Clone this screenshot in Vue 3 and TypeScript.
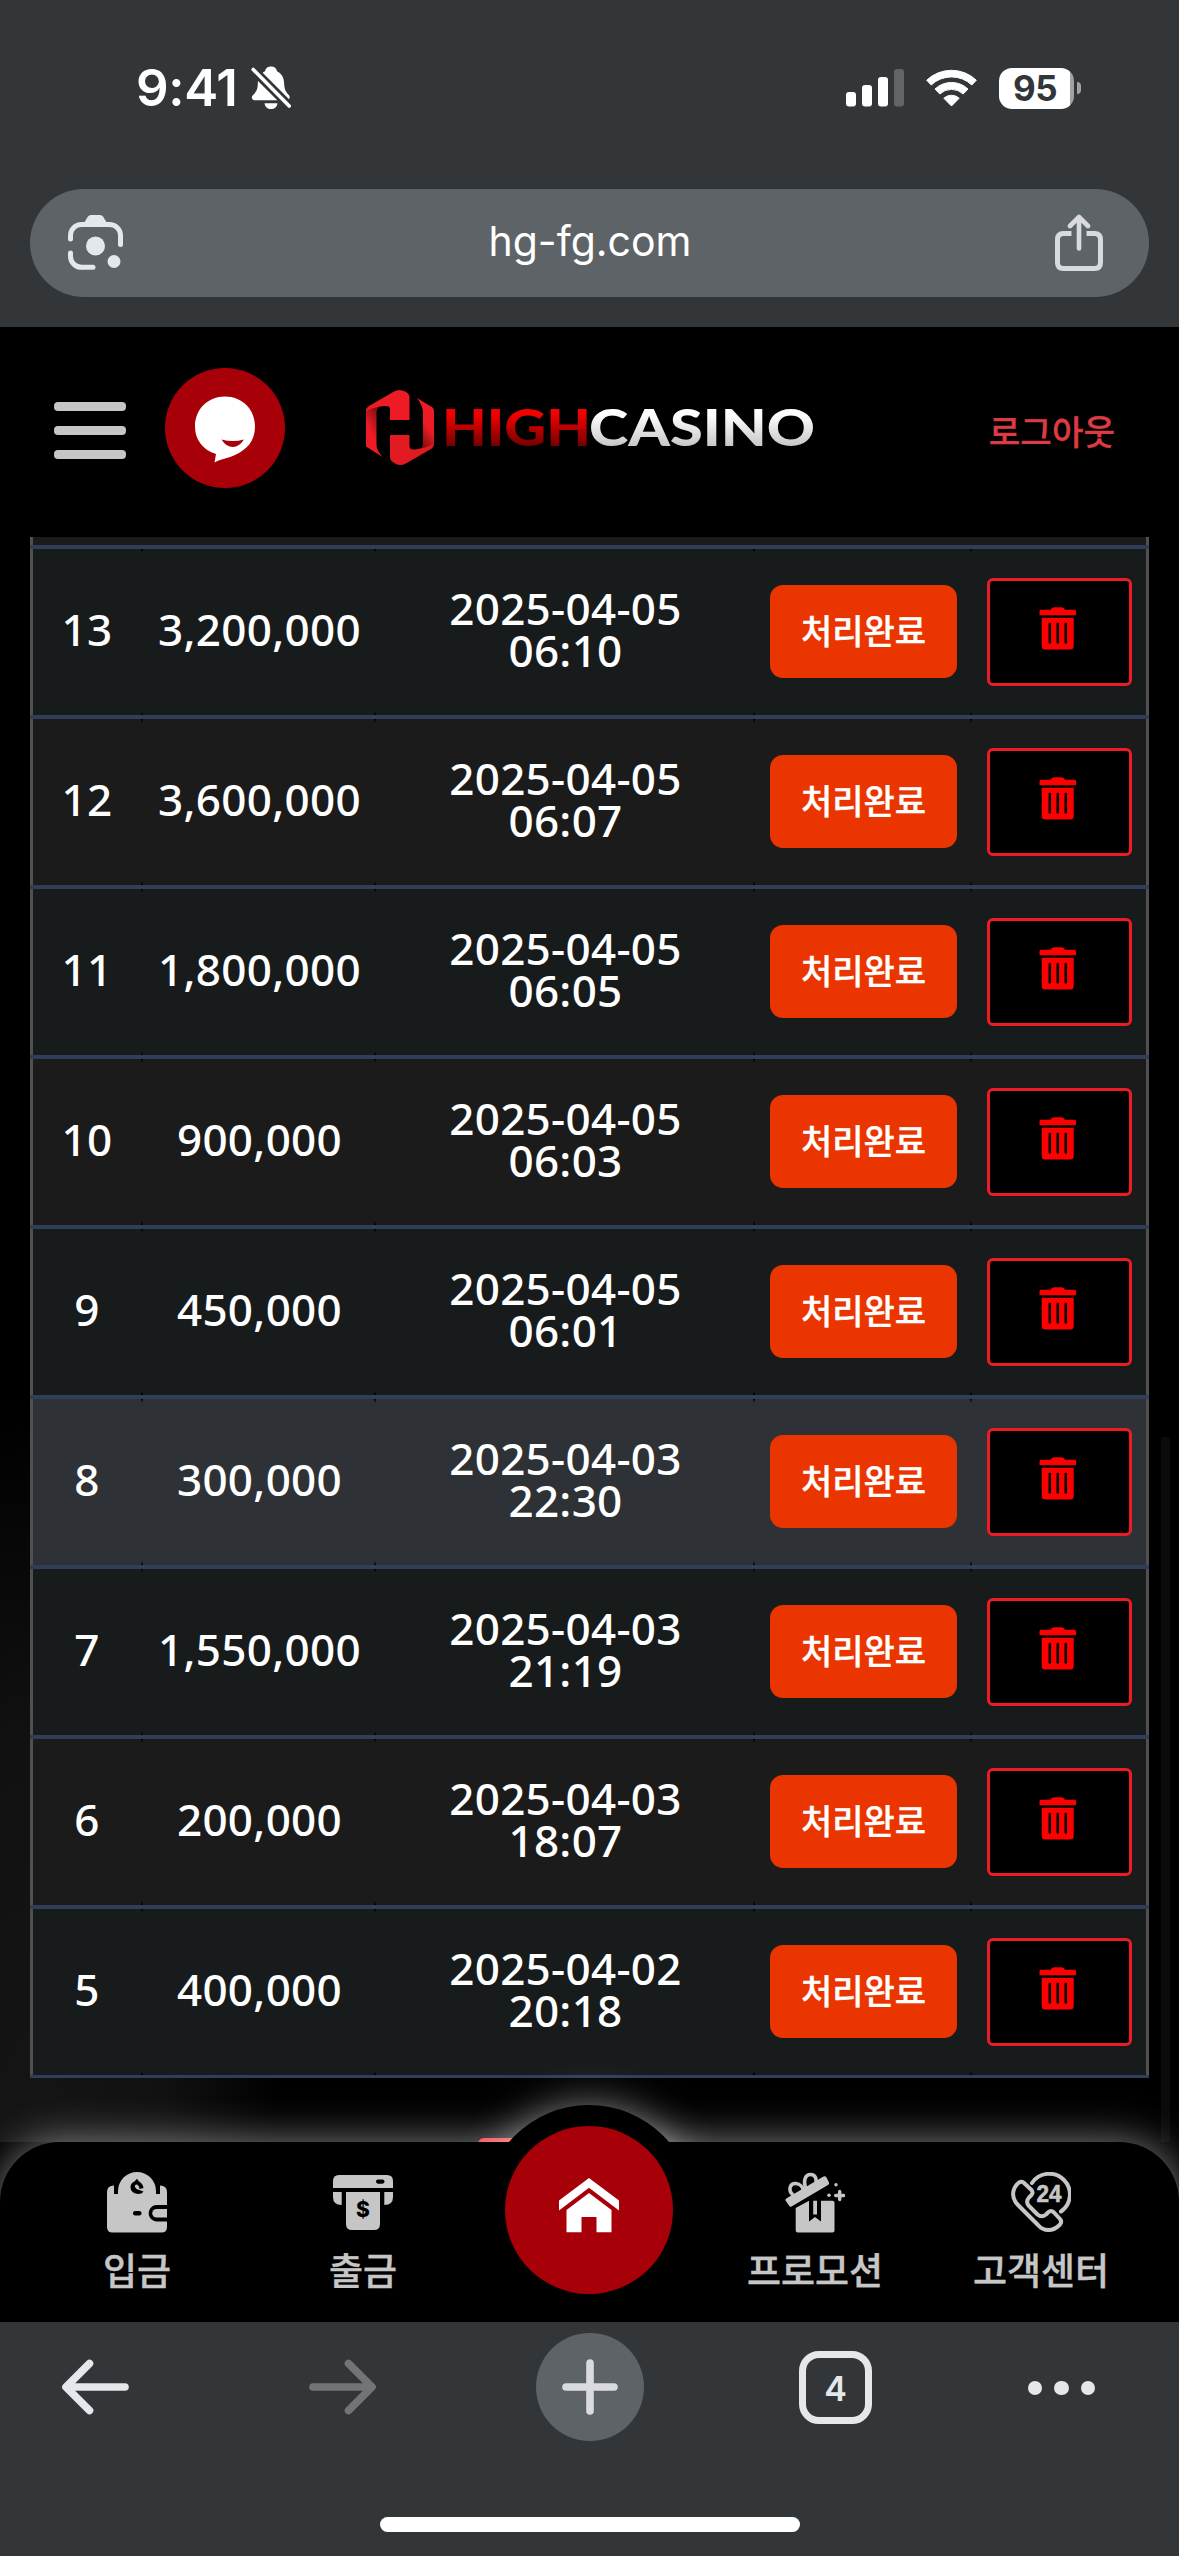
<script setup lang="ts">
interface Row {
  no: number
  amount: string
  date: string
  time: string
  active?: boolean
}

const rows: Row[] = [
  { no: 13, amount: '3,200,000', date: '2025-04-05', time: '06:10' },
  { no: 12, amount: '3,600,000', date: '2025-04-05', time: '06:07' },
  { no: 11, amount: '1,800,000', date: '2025-04-05', time: '06:05' },
  { no: 10, amount: '900,000', date: '2025-04-05', time: '06:03' },
  { no: 9, amount: '450,000', date: '2025-04-05', time: '06:01' },
  { no: 8, amount: '300,000', date: '2025-04-03', time: '22:30', active: true },
  { no: 7, amount: '1,550,000', date: '2025-04-03', time: '21:19' },
  { no: 6, amount: '200,000', date: '2025-04-03', time: '18:07' },
  { no: 5, amount: '400,000', date: '2025-04-02', time: '20:18' },
]
</script>

<template>
  <div class="screen">
    <div class="chrome-top">
      <div class="status">
        <span class="clock">9:41</span>
        <svg class="bell" width="40" height="44" viewBox="0 0 40 44">
          <path d="M20 0.5C23.4 0.5 25.5 2.6 26 5.2C31 7.6 33 12 33.2 18C33.4 24 35 26 38 29.2C39.4 30.8 38.6 34 36 34.3H3.5C0.8 34 0 31 1.8 29.2C5 26 6.6 24 6.8 18C7 12 9 7.6 14 5.2C14.5 2.6 16.6 0.5 20 0.5Z" fill="#fff" />
          <path d="M13.5 37.2H26.5C26 40.8 23.5 43 20 43C16.5 43 14 40.8 13.5 37.2Z" fill="#fff" />
          <path d="M2 3.5L38.2 39.8" stroke="#333639" stroke-width="9" />
          <path d="M2.2 3.5L38.2 40" stroke="#fff" stroke-width="3.6" stroke-linecap="round" />
        </svg>
        <svg class="signal" width="58" height="38" viewBox="0 0 58 38">
          <rect x="0" y="23" width="10" height="14.500" rx="3" fill="#fff" />
          <rect x="16" y="16" width="10" height="21.500" rx="3" fill="#fff" />
          <rect x="32" y="8" width="10" height="29.500" rx="3" fill="#fff" />
          <rect x="48" y="0" width="10" height="37.500" rx="3" fill="#636466" />
        </svg>
        <svg class="wifi" width="51" height="38" viewBox="0 0 51 38">
          <path d="M0.700 11.200A36 36 0 0 1 50.300 11.200L45.800 16A29.500 29.500 0 0 0 5.200 16Z" fill="#fff" stroke="#fff" stroke-width="1" stroke-linejoin="round" />
          <path d="M9 20A24 24 0 0 1 42 20L37.200 25A17 17 0 0 0 13.800 25Z" fill="#fff" stroke="#fff" stroke-width="1" stroke-linejoin="round" />
          <path d="M17.800 29.200A11.500 11.500 0 0 1 33.200 29.200L25.500 37Z" fill="#fff" stroke="#fff" stroke-width="1" stroke-linejoin="round" />
        </svg>
        <div class="battery"><span>95</span></div>
        <div class="nub"></div>
      </div>
      <div class="urlbar">
        <svg width="56" height="56" viewBox="0 0 56 56" fill="none">
          <path d="M2.500 24V20A11 11 0 0 1 13.500 9.500H41.500A11 11 0 0 1 52.500 20V29.500" stroke="#e4e8eb" stroke-width="5" stroke-linecap="round" />
          <path d="M2.500 38V41.500A11 11 0 0 0 13.500 52.300H25" stroke="#e4e8eb" stroke-width="5" stroke-linecap="round" />
          <path d="M16 8L19.800 1.800Q21 0 23 0H32Q34 0 35.200 1.800L39 8Z" fill="#e4e8eb" />
          <circle cx="27.500" cy="31" r="9.500" fill="#e4e8eb" />
          <circle cx="46" cy="46.500" r="6.500" fill="#e4e8eb" />
        </svg>
        <span class="url">hg-fg.com</span>
        <svg width="48" height="58" viewBox="0 0 48 58" fill="none" stroke="#d9dade" stroke-width="5" stroke-linecap="round" stroke-linejoin="round">
          <path d="M16.500 19.500H8.500Q2.500 19.500 2.500 25.500V48.500Q2.500 54.500 8.500 54.500H39.500Q45.500 54.500 45.500 48.500V25.500Q45.500 19.500 39.500 19.500H31.500" stroke-linecap="butt" />
          <path d="M24 34.500V3.500M15 12L24 3L33 12" stroke-width="4.600" />
        </svg>
      </div>
    </div>

    <header class="site-header">
      <div class="burger"><i></i><i></i><i></i></div>
      <div class="chat">
        <svg width="62" height="68" viewBox="0 0 62 68">
          <path d="M31 0.500C48 0.500 61 13 61 30.500C61 46 52 54 41 59C33 62.500 27 63 20.500 66.500L22 58C9 54 1 44 1 30.500C1 13 14 0.500 31 0.500Z" fill="#fff" />
          <path d="M27.500 43.500Q39 46.500 50 43.500Q45 51 39 51Q32 51 27.500 43.500Z" fill="#a80008" />
        </svg>
      </div>
      <svg class="logo" width="448" height="76" viewBox="366 390 448 76">
        <defs>
          <linearGradient id="lgRed" x1="0" y1="0" x2="0" y2="1">
            <stop offset="0.300" stop-color="#f40000" />
            <stop offset="0.850" stop-color="#6b0000" />
          </linearGradient>
          <linearGradient id="lgSilver" x1="0" y1="0" x2="0" y2="1">
            <stop offset="0.300" stop-color="#ffffff" />
            <stop offset="0.850" stop-color="#c4c4c4" />
          </linearGradient>
          <linearGradient id="lgLeft" x1="0.800" y1="0" x2="0.200" y2="1">
            <stop offset="0" stop-color="#6d0a0f" />
            <stop offset="0.600" stop-color="#ed1c24" />
          </linearGradient>
          <linearGradient id="lgRight" x1="0.700" y1="0" x2="0.300" y2="1">
            <stop offset="0.500" stop-color="#ed1c24" />
            <stop offset="1" stop-color="#6d0a0f" />
          </linearGradient>
        </defs>
        <path d="M366 411L380 406Q376.500 408 376.500 413V445Q376.500 450 382.500 457L366 446.500Z" fill="url(#lgLeft)" />
        <path d="M366 410Q366 408 369 406L394 391.500Q400 388.500 405 391.500L407.500 393Q409.500 394.500 409.500 397V420H390V409Q390 405.500 384 406Q374 407 366 411.500Z" fill="#ed1c24" />
        <path d="M417 398L431 406.500Q434 408 434 411V445L420 450Q423 447 423 443V413Q423 406 417 398Z" fill="url(#lgRight)" />
        <path d="M434 444Q434 447 431 449L406 463.500Q400 466.500 395 463.500L392 461.500Q390 460 390 457V435H409.500V446Q409.500 450 415 449.500Q426 448 434 444Z" fill="#e21b23" />
        <g font-family="Lato, 'Liberation Sans', sans-serif" font-weight="900" font-size="51">
          <text x="442" y="446" textLength="149" lengthAdjust="spacingAndGlyphs" fill="url(#lgRed)">HIGH</text>
          <text x="589" y="446" textLength="226" lengthAdjust="spacingAndGlyphs" fill="url(#lgSilver)">CASINO</text>
        </g>
      </svg>
      <a class="logout">로그아웃</a>
    </header>

    <main class="content">
      <div class="table">
        <div class="row stub"></div>
        <div v-for="r in rows" :key="r.no" class="row" :class="{ active: r.active }">
          <div class="cell no">{{ r.no }}</div>
          <div class="cell">{{ r.amount }}</div>
          <div class="cell"><span class="date">{{ r.date }} {{ r.time }}</span></div>
          <div class="cell act"><span class="done">처리완료</span></div>
          <div class="cell act last">
            <span class="trash">
              <svg width="38" height="44" viewBox="0 0 38 44">
                <path d="M2 2.700H11.500Q12.500 0.200 15 0.200H22.500Q25 0.200 26 2.700H35.500Q37 2.700 37 4.200V8.200H0.500V4.200Q0.500 2.700 2 2.700Z" fill="#f00" />
                <path d="M2.700 10.800H34.700V39Q34.700 42.600 31.200 42.600H6.200Q2.700 42.600 2.700 39Z" fill="#f00" />
                <path d="M10.800 17V35.500M18.800 17V35.500M26.800 17V35.500" stroke="#000" stroke-width="2.600" stroke-linecap="round" />
              </svg>
            </span>
          </div>
        </div>
      </div>
      <div class="pager"></div>
    </main>

    <nav class="tabs">
      <div class="tabs-bg"></div>
      <div class="bump"></div>
      <div class="tab">
        <svg width="60" height="61" viewBox="0 0 60 61">
          <path d="M0 55V20Q0 13.500 7 13.500V22H11V19A19 19 0 0 1 49 19V22H53V13.500Q60 13.500 60 20V33H49A8.300 8.300 0 0 0 49 49.500H60V55Q60 60.500 54.500 60.500H5.500Q0 60.500 0 55Z" fill="#c6c6c6" />
          <path d="M60 37V45.500H49.500A4.250 4.250 0 0 1 49.500 37Z" fill="#c6c6c6" />
          <rect x="26" y="39" width="8.500" height="4.500" rx="2.200" fill="#000" />
          <path d="M30 6.800L32 9.500Q36 11.500 36.500 16L32.500 17Q32 12.500 29 12.500Q26.500 14 29.500 17L36.500 19.500Q35 22 31 22Q23.500 21 23.500 15Q23.500 11 27.500 9.500Z" fill="#000" />
        </svg>
        <span>입금</span>
      </div>
      <div class="tab">
        <svg width="60" height="61" viewBox="0 -3 60 61">
          <path d="M0 13V6Q0 0 6 0H54Q60 0 60 6V13Z" fill="#c6c6c6" />
          <path d="M0 17H8.700V30Q0 30 0 22ZM60 17H51.300V30Q60 30 60 22Z" fill="#c6c6c6" />
          <path d="M13 17H47V49Q47 55 41 55H19Q13 55 13 49Z" fill="#c6c6c6" />
          <rect x="43" y="4.500" width="8.500" height="4.200" rx="2.100" fill="#000" />
          <text x="30" y="42" text-anchor="middle" font-family="Inter, sans-serif" font-weight="800" font-size="21" fill="#000">$</text>
        </svg>
        <span>출금</span>
      </div>
      <div class="tab home">
        <div class="home-btn">
          <svg width="60" height="55" viewBox="0 0 60 55" fill="#fff">
            <path d="M30 0L60 22.500V32.500L30 9.700L0 32.500V22.500Z" />
            <path d="M30 15L52.500 32V54.300H37.500V39H22.500V54.300H7.500V32Z" />
          </svg>
        </div>
      </div>
      <div class="tab">
        <svg width="60" height="61" viewBox="0 0 60 61">
          <g fill="none" stroke="#c6c6c6" stroke-width="3.600">
            <path d="M8 23C2.500 18 5 11 11 11.500C15 12 18 15 18.500 19" />
            <path d="M21 17C18 9 20 2.500 25.500 2.500C31 2.500 32 8 30.500 12" />
          </g>
          <path d="M1.200 26.500L38.500 4.500Q40.500 3.500 41.500 5.500L44 10.500Q44.500 12 43 13L6.500 34.500Q5 35.200 4 33.500L0.500 28.500Q0 27.300 1.200 26.500Z" fill="#c6c6c6" />
          <path d="M10.700 36L24 28.700V49.500L30 45L36 49.500V28.700H47.500Q49.500 28.700 49.500 30.700V58.500Q49.500 60.500 47.500 60.500H12.700Q10.700 60.500 10.700 58.500Z" fill="#c6c6c6" />
          <path d="M28.200 28.700H32V42.500H28.200Z" fill="#c6c6c6" />
          <circle cx="51" cy="12.800" r="1.700" fill="#c6c6c6" />
          <circle cx="44" cy="23.300" r="1.800" fill="#c6c6c6" />
          <path d="M54.700 19.500V27.500M50.700 23.500H58.700" stroke="#c6c6c6" stroke-width="3.400" stroke-linecap="round" />
        </svg>
        <span>프로모션</span>
      </div>
      <div class="tab">
        <svg width="60" height="61" viewBox="0 0 60 61">
          <g fill="none" stroke="#c6c6c6" stroke-width="4" stroke-linecap="round" stroke-linejoin="round">
            <path d="M21 11A20.700 20.700 0 1 1 50 39.500" />
            <path d="M12.500 10.500Q10.500 9 8 10.500C2 15 0.500 23 4 29Q5 31 7 33L27 53C33 60 42 59.500 48.500 53Q51.500 50 49 47L43 40.500Q40 37.500 37 40.500L35 42.500Q30.500 46 26.500 42.500L17.500 33.500Q14.500 29.500 18 25.500L20.500 23Q22.500 20.500 20.500 18Z" />
          </g>
          <text x="25.500" y="29.500" textLength="25" lengthAdjust="spacingAndGlyphs" font-family="'Liberation Sans', sans-serif" font-weight="700" font-size="23" fill="#c6c6c6" stroke="#c6c6c6" stroke-width="0.600">24</text>
        </svg>
        <span>고객센터</span>
      </div>
    </nav>

    <footer class="toolbar">
      <div class="tools">
        <svg width="68" height="56" viewBox="0 0 68 56" fill="none" stroke="#e4e8eb" stroke-width="7.600" stroke-linecap="round" stroke-linejoin="round">
          <path d="M27.500 4.500L4 28L27.500 51.500M5 28H63" />
        </svg>
        <svg class="fwd" width="68" height="56" viewBox="0 0 68 56" fill="none" stroke="#737476" stroke-width="7.600" stroke-linecap="round" stroke-linejoin="round">
          <path d="M39.500 4.500L63 28L39.500 51.500M62 28H4" />
        </svg>
        <div class="plus">
          <svg width="56" height="56" viewBox="0 0 56 56" stroke="#dadbdf" stroke-width="7.600" stroke-linecap="round">
            <path d="M28 4V52M4 28H52" />
          </svg>
        </div>
        <div class="count">4</div>
        <div class="dots"><i></i><i></i><i></i></div>
      </div>
      <div class="indicator"></div>
    </footer>
  </div>
</template>

<style>
body {
  margin: 0;
  background: #000;
}
</style>

<style scoped>
.screen {
  width: 1179px;
  height: 2556px;
  overflow: hidden;
  display: flex;
  flex-direction: column;
  background: #000;
  color: #fff;
  font-family: 'Noto Sans', 'Noto Sans CJK KR', sans-serif;
}
svg {
  display: block;
  flex: none;
}
.chrome-top {
  height: 327px;
  background: #333639;
  flex: none;
}
.status {
  height: 189px;
  box-sizing: border-box;
  padding: 0 99px 13px 136px;
  display: flex;
  align-items: center;
}
.clock {
  font: 600 51px/60px Inter, sans-serif;
  letter-spacing: -0.300px;
  width: 115px;
  white-space: nowrap;
}
.signal {
  margin-left: auto;
}
.wifi {
  margin-left: 22px;
}
.battery {
  width: 75px;
  height: 41px;
  margin-left: 22px;
  border-radius: 13px;
  background: linear-gradient(90deg, #fff 71px, #a0a1a3 71px);
  color: #333639;
  font: 700 35px/41px Inter, sans-serif;
  text-align: center;
  letter-spacing: -0.500px;
}
.battery span {
  margin-right: 3px;
}
.nub {
  width: 4px;
  height: 12px;
  margin-left: 3px;
  margin-right: -1px;
  border-radius: 0 4px 4px 0;
  background: #a0a1a3;
}
.urlbar {
  height: 108px;
  margin: 0 30px;
  padding: 0 46px 0 38px;
  border-radius: 54px;
  background: #5e6367;
  display: flex;
  align-items: center;
  justify-content: space-between;
}
.url {
  font: 400 41px/50px Inter, sans-serif;
  margin: -5px 0 0 1px;
}
.site-header {
  height: 210px;
  flex: none;
  box-sizing: border-box;
  padding: 0 64px 8px 54px;
  display: flex;
  align-items: center;
  background: #000;
}
.burger {
  width: 72px;
  margin-top: 5px;
  display: flex;
  flex-direction: column;
  gap: 15px;
}
.burger i {
  height: 9px;
  border-radius: 4px;
  background: #c6c6c6;
}
.chat {
  width: 120px;
  height: 120px;
  margin-left: 39px;
  border-radius: 50%;
  background: #a80008;
  display: flex;
  align-items: center;
  justify-content: center;
}
.chat svg {
  margin-top: 3px;
}
.logo {
  margin-left: 81px;
}
.logout {
  margin: 3px 0 0 auto;
  color: #dc3b44;
  font: 500 34.300px/50px 'Noto Sans CJK KR', sans-serif;
  -webkit-text-stroke: 0.300px currentColor;
}
.content {
  height: 1605px;
  flex: none;
  padding: 0 30px;
  background:
    linear-gradient(90deg, transparent 1161px, #0a0a0a 1161px, #0a0a0a 1170px, transparent 1170px) 0 900px no-repeat,
    radial-gradient(ellipse 250px 740px at 30px 1605px, #151515 0, #111 55%, transparent 100%);
}
.table {
  border-left: 3px solid #505050;
  border-right: 3px solid #505050;
}
.row {
  display: grid;
  grid-template-columns: 110px 233px 379px 217px 174px;
  height: 166px;
  margin: 0 -3px;
  padding: 0 3px;
  border-top: 4px solid #2f3e59;
  background: #505050;
}
.row.stub {
  height: 8px;
  border-top: 0;
  background: linear-gradient(90deg, #505050 3px, #1b1b1b 3px, #1b1b1b 1116px, #505050 1116px);
}
.row:last-child {
  border-bottom: 3px solid #2f3e59;
}
.cell {
  --bg: #181b1c;
  display: flex;
  align-items: center;
  justify-content: center;
  padding-bottom: 6px;
  font-size: 44px;
  line-height: 42px;
  font-weight: 500;
  letter-spacing: 0.300px;
  text-align: center;
  background:
    linear-gradient(#000, transparent) right top / 2px 4px no-repeat,
    linear-gradient(transparent, #000) right bottom / 2px 4px no-repeat,
    var(--bg);
}
.row:nth-child(odd) .cell {
  --bg: #1b1b1b;
}
.row.active .cell {
  --bg: #2e3136;
}
.cell.no {
  padding-right: 2px;
}
.cell.act {
  padding-bottom: 1px;
}
.cell.last {
  background: var(--bg);
}
.date {
  width: 260px;
}
.done {
  width: 187px;
  height: 93px;
  border-radius: 13px;
  background: #ea3500;
  font: 500 34px/90px 'Noto Sans CJK KR', sans-serif;
  letter-spacing: 0;
  text-align: center;
  -webkit-text-stroke: 0.350px currentColor;
}
.trash {
  width: 139px;
  height: 102px;
  border: 3px solid #ed1c24;
  border-radius: 6px;
  background: #000;
  display: flex;
  align-items: center;
  justify-content: center;
}
.trash svg {
  margin: 0 2px 6px 0;
}
.pager {
  width: 70px;
  height: 60px;
  margin: 60px 0 0 448px;
  border-radius: 6px;
  background: #f02f38;
}
.tabs {
  position: relative;
  z-index: 1;
  height: 180px;
  flex: none;
  padding: 0 25px 0 24px;
  display: grid;
  grid-template-columns: repeat(5, 226px);
  color: #c6c6c6;
}
.tabs-bg {
  position: absolute;
  inset: 0;
  border-radius: 60px 60px 0 0;
  background: #000;
  box-shadow: 0 0 42px rgba(255, 255, 255, 0.5);
}
.bump {
  position: absolute;
  left: 484px;
  top: -37px;
  width: 210px;
  height: 210px;
  border-radius: 50%;
  background: #000;
  box-shadow: 0 0 42px rgba(255, 255, 255, 0.5);
  clip-path: inset(-60px -60px 173px -60px);
}
.tab {
  position: relative;
  display: flex;
  flex-direction: column;
  align-items: center;
  padding-top: 30px;
}
.tab span {
  margin-top: 9px;
  font: 500 37px/54px 'Noto Sans CJK KR', sans-serif;
  white-space: nowrap;
  -webkit-text-stroke: 0.400px currentColor;
}
.home {
  padding-top: 0;
}
.home-btn {
  width: 168px;
  height: 168px;
  margin-top: -16px;
  border-radius: 50%;
  background: #a80008;
  display: flex;
  align-items: center;
  justify-content: center;
}
.home-btn svg {
  margin-top: -10px;
}
.toolbar {
  position: relative;
  z-index: 2;
  height: 234px;
  flex: none;
  background: #333639;
}
.tools {
  height: 130px;
  padding: 0 84px 0 62px;
  display: flex;
  align-items: center;
}
.fwd {
  margin-left: 179px;
}
.plus {
  width: 108px;
  height: 108px;
  margin-left: 159px;
  border-radius: 50%;
  background: #5e6367;
  display: flex;
  align-items: center;
  justify-content: center;
}
.count {
  width: 59px;
  height: 59px;
  margin-left: 155px;
  border: 7px solid #e4e8eb;
  border-radius: 20px;
  color: #e4e8eb;
  font: 600 34px/62px Inter, sans-serif;
  text-align: center;
}
.dots {
  margin-left: auto;
  margin-top: 2px;
  display: flex;
  gap: 12px;
}
.dots i {
  width: 14.500px;
  height: 14.500px;
  border-radius: 50%;
  background: #e4e8eb;
}
.indicator {
  width: 420px;
  height: 15px;
  margin: 65px 0 0 380px;
  border-radius: 8px;
  background: #fff;
}
</style>
